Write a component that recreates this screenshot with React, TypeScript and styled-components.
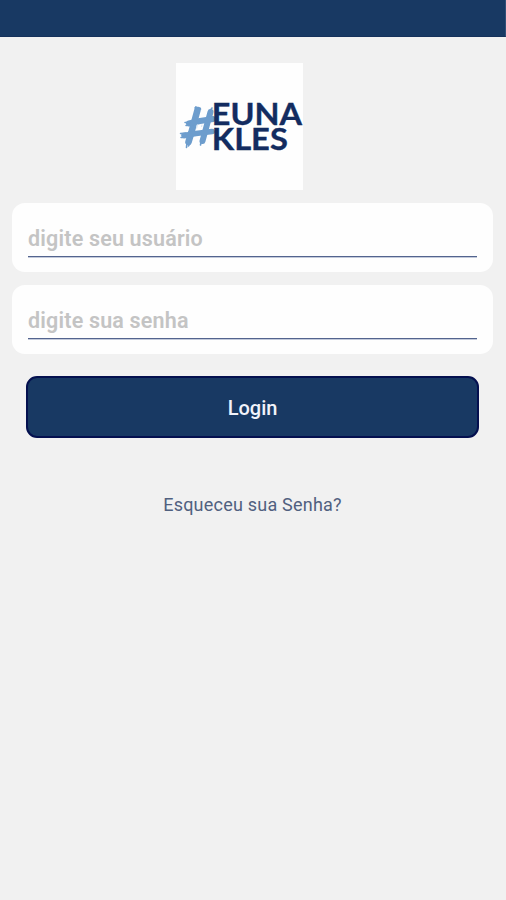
import React from "react";
import styled, { createGlobalStyle } from "styled-components";

const GlobalStyle = createGlobalStyle`
  * { box-sizing: border-box; }
  body { margin: 0; background: #f1f1f1; font-family: Roboto, sans-serif; }
`;

const Screen = styled.main`
  min-height: 900px;
  display: flex;
  flex-direction: column;
  background: #f1f1f1;
`;

const StatusBar = styled.header`
  height: 37px;
  flex: none;
  background: #183963;
  border-bottom: 1px solid #15315b;
  border-right: 1px solid #315078;
`;

const LogoFrame = styled.div`
  width: 127px;
  height: 127px;
  margin: 26px 0 13px 176px;
  background: #fefefe;
`;

const LogoSvg = styled.svg`
  display: block;
`;

const Form = styled.form`
  display: flex;
  flex-direction: column;
  padding: 0 13px 0 12px;
`;

const FieldCard = styled.label`
  display: block;
  height: 69px;
  margin-bottom: 13px;
  padding: 16px 16px 0;
  border-radius: 13px;
  background: #fefefe;
`;

const Field = styled.input`
  display: block;
  width: 100%;
  height: 38px;
  padding: 1px 0 0;
  border: 0;
  border-bottom: 1px solid #53648e;
  box-shadow: 0 1px 0 #c3cadb;
  outline: 0;
  background: transparent;
  color: #183963;
  font: 600 21.5px Roboto, sans-serif;
  letter-spacing: 0.18px;
  &::placeholder { color: #c4c4c4; opacity: 1; }
`;

const LoginButton = styled.button`
  height: 62px;
  margin: 9px 14px 0;
  padding: 2px 0 0;
  border: 2px solid #04104f;
  border-radius: 11px;
  background: #183963;
  color: #f1f3fa;
  font: 500 20px Roboto, sans-serif;
`;

const ForgotLink = styled.a`
  align-self: center;
  margin-top: 55px;
  color: #50607f;
  font-size: 18px;
  line-height: 24px;
  letter-spacing: 0.22px;
  text-decoration: none;
`;

function Logo() {
  return (
    <LogoSvg width="127" height="127" viewBox="0 0 127 127" role="img" aria-label="#EUNAKLES">
      <g fill="none" stroke="#6d9dcd" strokeLinecap="round" strokeLinejoin="round">
        <path d="M21.5 47 L18.5 58 L15.5 69 L12.5 79" strokeWidth="6.6" />
        <path d="M34.5 49 L32 58 L29 69 L26.5 78" strokeWidth="6" />
        <path d="M13 60.5 L24 58 L37 56" strokeWidth="6" />
        <path d="M8 72.5 L20 70.5 L36 68.5" strokeWidth="5.6" />
        <path d="M19 45 L20 43.8 M24 45 L24.5 46 M36 45 L32 51 M11 79 L10.5 84.5 M14 80 L12.5 83 M25 79 L24.5 82" strokeWidth="1.6" />
        <path d="M4.5 70.5 L10 70 M5 74.5 L10 74.5 M9 59.5 L14 59.5 M10 62.5 L14 62" strokeWidth="1.5" />
      </g>
      <path d="M20.5 65.5 L21.5 61.5 M25.5 64 L26 61.5" stroke="#d8e6f4" strokeWidth="1.1" fill="none" />
      <g fill="#132c60" fontFamily="Lato, sans-serif" fontWeight="700" fontSize="30" stroke="#132c60" strokeWidth="0.35">
        <text x="35.8" y="61.6" textLength="90.2" lengthAdjust="spacingAndGlyphs">EUNA</text>
        <text x="35.8" y="86.6" textLength="76" lengthAdjust="spacingAndGlyphs">KLES</text>
      </g>
    </LogoSvg>
  );
}

export default function App() {
  return (
    <>
      <GlobalStyle />
      <Screen>
        <StatusBar />
        <LogoFrame>
          <Logo />
        </LogoFrame>
        <Form onSubmit={(e) => e.preventDefault()}>
          <FieldCard>
            <Field placeholder="digite seu usuário" />
          </FieldCard>
          <FieldCard>
            <Field type="password" placeholder="digite sua senha" />
          </FieldCard>
          <LoginButton type="submit">Login</LoginButton>
          <ForgotLink href="#">Esqueceu sua Senha?</ForgotLink>
        </Form>
      </Screen>
    </>
  );
}
